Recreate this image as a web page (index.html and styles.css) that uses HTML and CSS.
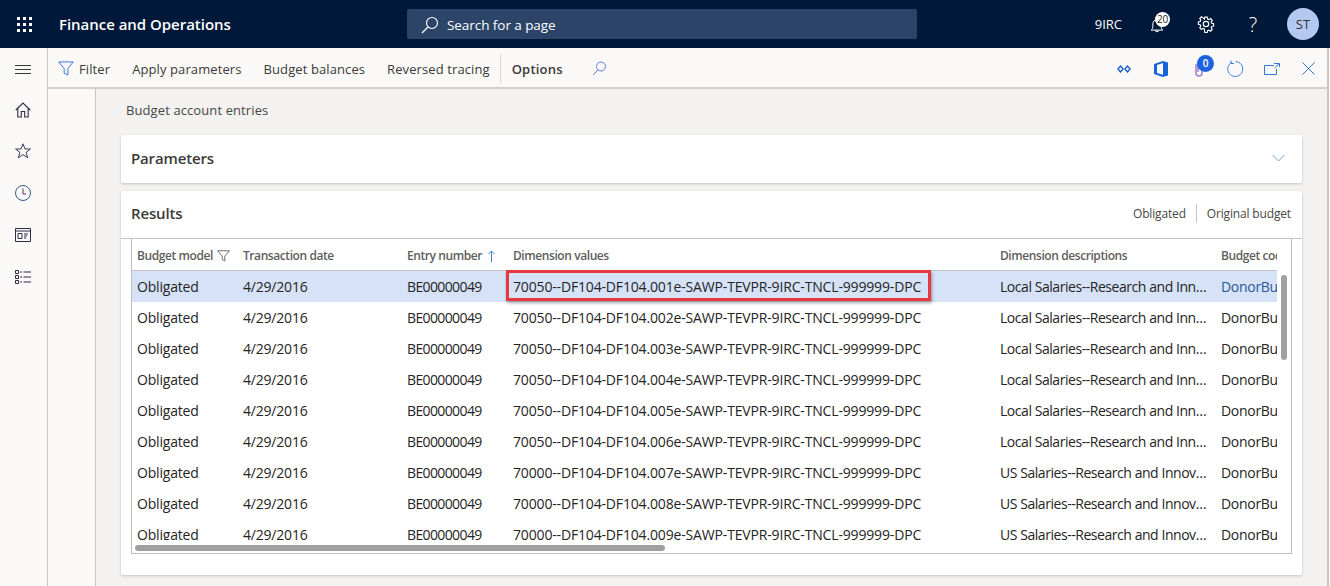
FILE: index.html
```html
<!DOCTYPE html>
<html lang="en">
<head>
<meta charset="utf-8">
<title>Budget account entries</title>
<link rel="stylesheet" href="styles.css">
</head>
<body>
<header class="topbar">
  <button class="waffle" aria-label="Apps">
    <svg width="16" height="16" viewBox="0 0 16 16" fill="#fff"><rect x="0" y="0" width="3" height="3"/><rect x="6" y="0" width="3" height="3"/><rect x="12" y="0" width="3" height="3"/><rect x="0" y="6" width="3" height="3"/><rect x="6" y="6" width="3" height="3"/><rect x="12" y="6" width="3" height="3"/><rect x="0" y="12" width="3" height="3"/><rect x="6" y="12" width="3" height="3"/><rect x="12" y="12" width="3" height="3"/></svg>
  </button>
  <div class="brand">Finance and Operations</div>
  <div class="search">
    <svg width="18" height="18" viewBox="0 0 18 18" fill="none" stroke="#fff" stroke-width="1.2"><circle cx="11" cy="7" r="5.5"/><path d="M7 11l-6 6"/></svg>
    <span>Search for a page</span>
  </div>
  <div class="top-right">
    <span class="company">9IRC</span>
    <span class="bell">
      <svg width="14" height="15" viewBox="0 0 16 18" fill="none" stroke="#fff" stroke-width="1.2"><path d="M1 14.500c1.500-1 2-2.500 2-5V7a5 5 0 0 1 10 0v2.500c0 2.500.5 4 2 5z"/><path d="M6 14.500a2 2 0 0 0 4 0"/></svg>
      <span class="bell-badge">20</span>
    </span>
    <svg class="gear" width="18" height="18" viewBox="0 0 20 20" fill="none" stroke="#fff" stroke-width="1.400"><circle cx="10" cy="10" r="3"/><path d="M8.500 1.500h3l.5 2.400 1.600.7 2.100-1.300 2 2.100-1.300 2 .7 1.700 2.300.5v3l-2.300.5-.7 1.700 1.300 2-2 2.100-2.100-1.300-1.600.7-.5 2.300h-3L8 16.100l-1.600-.7-2.100 1.300-2-2.100 1.300-2-.7-1.700-2.300-.5v-3l2.300-.5.7-1.700-1.300-2 2-2.100 2.100 1.300L8 3.900z" transform="translate(1 1) scale(.9)"/></svg>
    <span class="help">?</span>
    <span class="avatar">ST</span>
  </div>
</header>
<div class="shell">
  <nav class="rail">
    <svg class="burger" width="16" height="9" viewBox="0 0 16 9" stroke="#3b3a39" stroke-width="1"><path d="M0 .5h16M0 4.500h16M0 8.500h16"/></svg>
    <svg class="ri ri-home" width="16" height="16" viewBox="0 0 16 16" fill="none" stroke="#2d2a4a" stroke-width="1.100"><path d="M.8 8 8 1l7.200 7M2.800 6.500V15h3.500V9.500h3.400V15h3.500V6.500"/></svg>
    <svg class="ri ri-star" width="16" height="16" viewBox="0 0 16 16" fill="none" stroke="#3a3a55" stroke-width="1"><path d="M8 .8 10 6h5.400l-4.300 3.400 1.600 5.400L8 11.600l-4.700 3.200 1.600-5.400L.6 6H6z"/></svg>
    <svg class="ri ri-clock" width="16" height="16" viewBox="0 0 16 16" fill="none" stroke-width="1"><circle cx="8" cy="8" r="7.500" stroke="#3a5a8a"/><path d="M8 3.500V9h3" stroke="#5a2a6a"/></svg>
    <svg class="ri ri-card" width="16" height="14" viewBox="0 0 16 14" fill="none" stroke="#2d2a4a" stroke-width="1"><path d="M.5.500h15v13H.5zM.5 3h15M3 5.500h4v5H3zM9 6h4M9 8h3M9 10h2"/></svg>
    <svg class="ri ri-list" width="16" height="14" viewBox="0 0 16 14" fill="none" stroke="#2d2a4a" stroke-width="1"><path d="M.5.500h3v3h-3zM.5 5.500h3v3h-3zM.5 10.500h3v3h-3zM5 2h2M8.500 2H16M5 7h2M8.500 7H16M5 12h2M8.500 12H16"/></svg>
  </nav>
  <div class="workspace">
    <div class="cmdbar">
      <svg class="cmd-filter" width="16" height="15" viewBox="0 0 17 16" fill="none" stroke="#2f6fd8" stroke-width="1"><path d="M.8 1h15.400L10.500 8V15l-4-2V8z"/></svg>
      <span class="cmd cmd-first">Filter</span>
      <span class="cmd">Apply parameters</span>
      <span class="cmd">Budget balances</span>
      <span class="cmd">Reversed tracing</span>
      <span class="cmd-sep"></span>
      <span class="cmd cmd-strong">Options</span>
      <svg class="cmd-search" width="15" height="15" viewBox="0 0 14 15" fill="none" stroke="#5b7fe0" stroke-width="1"><circle cx="8.500" cy="5.500" r="4.500"/><path d="M5.300 9 .8 14"/></svg>
      <div class="cmd-right">
        <svg width="14" height="8" viewBox="0 0 14 8" fill="#1f5fc8"><path d="M3.500 0 7 4 3.500 8 0 4zM3.500 2.300 1.800 4l1.700 1.700L5.200 4zM10.500 0 14 4l-3.500 4L7 4zM10.500 2.300 8.800 4l1.700 1.700L12.200 4z" fill-rule="evenodd"/></svg>
        <svg class="ic-office" width="14" height="16" viewBox="0 0 14 16" fill="#1565d8"><path d="M0 3 9 0l5 1.500v13L9 16 0 13zM9 2 3 4v8l6 1.800z" fill-rule="evenodd"/></svg>
        <span class="attach">
          <svg width="8" height="17" viewBox="0 0 8 17" fill="none" stroke="#a77ac8" stroke-width="1.500"><path d="M1 4v9a3 3 0 0 0 6 0V3a2 2 0 0 0-4 0v9"/></svg>
          <span class="attach-badge">0</span>
        </span>
        <svg class="ic-refresh" width="17" height="17" viewBox="0 0 17 17" fill="none" stroke="#3f80e0" stroke-width="1"><path d="M4.500 2.500a7.500 7.500 0 1 0 4-1"/><path d="M4 .5v3h3"/></svg>
        <svg class="ic-open" width="16" height="12" viewBox="0 0 16 12" fill="none" stroke="#2f78d8" stroke-width="1"><path d="M10 2.500H.5v9h12V6M10 .5h5.500V4M15 1l-4.500 4"/></svg>
        <svg class="ic-close" width="13" height="13" viewBox="0 0 13 13" stroke="#2f78d8" stroke-width="1"><path d="M.5.500l12 12M12.500.500l-12 12"/></svg>
      </div>
    </div>
    <div class="below">
      <div class="subrail"></div>
      <main class="content">
        <div class="crumb">Budget account entries</div>
        <section class="card card-params">
          <h2>Parameters</h2>
          <svg width="13" height="8" viewBox="0 0 13 8" fill="none" stroke="#6f9bd8" stroke-width="1"><path d="M.5 1l6 6 6-6"/></svg>
        </section>
        <section class="card card-results">
          <div class="results-head">
            <h2>Results</h2>
            <div class="tags"><span>Obligated</span><i></i><span>Original budget</span></div>
          </div>
          <div class="grid">
            <div class="grid-view">
              <div class="row row-head">
                <div class="c c1">Budget model<svg class="th-filter" width="13" height="12" viewBox="0 0 13 12" fill="none" stroke="#605e5c" stroke-width=".9"><path d="M.5.800h12L7.800 6v5l-2.600-1.500V6z"/></svg></div>
                <div class="c c2">Transaction date</div>
                <div class="c c3">Entry number<svg class="th-sort" width="7" height="12" viewBox="0 0 7 12" fill="none" stroke="#4a7fc8" stroke-width="1"><path d="M3.500 12V1M.5 4l3-3 3 3"/></svg></div>
                <div class="c c4">Dimension values</div>
                <div class="c c5">Dimension descriptions</div>
                <div class="c c6">Budget code</div>
              </div>
              <div class="row row-sel">
                <div class="c c1">Obligated</div><div class="c c2">4/29/2016</div><div class="c c3">BE00000049</div>
                <div class="c c4 hl">70050--DF104-DF104.001e-SAWP-TEVPR-9IRC-TNCL-999999-DPC</div>
                <div class="c c5">Local Salaries--Research and Innovation</div><div class="c c6 link">DonorBudget</div>
              </div>
              <div class="row"><div class="c c1">Obligated</div><div class="c c2">4/29/2016</div><div class="c c3">BE00000049</div><div class="c c4">70050--DF104-DF104.002e-SAWP-TEVPR-9IRC-TNCL-999999-DPC</div><div class="c c5">Local Salaries--Research and Innovation</div><div class="c c6">DonorBudget</div></div>
              <div class="row"><div class="c c1">Obligated</div><div class="c c2">4/29/2016</div><div class="c c3">BE00000049</div><div class="c c4">70050--DF104-DF104.003e-SAWP-TEVPR-9IRC-TNCL-999999-DPC</div><div class="c c5">Local Salaries--Research and Innovation</div><div class="c c6">DonorBudget</div></div>
              <div class="row"><div class="c c1">Obligated</div><div class="c c2">4/29/2016</div><div class="c c3">BE00000049</div><div class="c c4">70050--DF104-DF104.004e-SAWP-TEVPR-9IRC-TNCL-999999-DPC</div><div class="c c5">Local Salaries--Research and Innovation</div><div class="c c6">DonorBudget</div></div>
              <div class="row"><div class="c c1">Obligated</div><div class="c c2">4/29/2016</div><div class="c c3">BE00000049</div><div class="c c4">70050--DF104-DF104.005e-SAWP-TEVPR-9IRC-TNCL-999999-DPC</div><div class="c c5">Local Salaries--Research and Innovation</div><div class="c c6">DonorBudget</div></div>
              <div class="row"><div class="c c1">Obligated</div><div class="c c2">4/29/2016</div><div class="c c3">BE00000049</div><div class="c c4">70050--DF104-DF104.006e-SAWP-TEVPR-9IRC-TNCL-999999-DPC</div><div class="c c5">Local Salaries--Research and Innovation</div><div class="c c6">DonorBudget</div></div>
              <div class="row"><div class="c c1">Obligated</div><div class="c c2">4/29/2016</div><div class="c c3">BE00000049</div><div class="c c4">70000--DF104-DF104.007e-SAWP-TEVPR-9IRC-TNCL-999999-DPC</div><div class="c c5">US Salaries--Research and Innovation</div><div class="c c6">DonorBudget</div></div>
              <div class="row"><div class="c c1">Obligated</div><div class="c c2">4/29/2016</div><div class="c c3">BE00000049</div><div class="c c4">70000--DF104-DF104.008e-SAWP-TEVPR-9IRC-TNCL-999999-DPC</div><div class="c c5">US Salaries--Research and Innovation</div><div class="c c6">DonorBudget</div></div>
              <div class="row"><div class="c c1">Obligated</div><div class="c c2">4/29/2016</div><div class="c c3">BE00000049</div><div class="c c4">70000--DF104-DF104.009e-SAWP-TEVPR-9IRC-TNCL-999999-DPC</div><div class="c c5">US Salaries--Research and Innovation</div><div class="c c6">DonorBudget</div></div>
            </div>
            <div class="scroll-v"></div>
            <div class="scroll-h"></div>
          </div>
        </section>
      </main>
    </div>
  </div>
</div>
</body>
</html>
```
FILE: styles.css
```css
*, *::after { box-sizing: border-box; }
html, body { margin: 0; height: 100%; overflow: hidden; }
body {
  font-family: "Open Sans", "Noto Sans", sans-serif;
  font-size: 13px;
  color: #252423;
  background: #faf9f8;
  display: flex;
  flex-direction: column;
  height: 586px;
}
h2 { margin: 0; font-weight: 600; font-size: 15px; color: #3b3a39; letter-spacing: -.15px; }

/* top bar */
.topbar { height: 48px; flex: none; background: #00183a; color: #fff; display: flex; align-items: center; }
.waffle { width: 48px; height: 48px; padding: 1px 0 0 1px; background: none; border: 0; display: flex; align-items: center; justify-content: center; }
.brand { margin-left: 11px; width: 348px; font-size: 15px; font-weight: 600; letter-spacing: -.03px; }
.search { width: 510px; height: 30px; background: #2b4468; border-radius: 2px; display: flex; align-items: center; padding: 1px 0 0 14px; gap: 8px; font-size: 13.500px; letter-spacing: -.06px; }
.top-right { margin-left: auto; display: flex; align-items: center; height: 48px; padding-right: 11px; }
.company { font-size: 13px; margin-right: 28px; }
.bell { position: relative; display: flex; margin-right: 33px; padding-top: 3px; }
.bell-badge { position: absolute; left: 5px; top: -3px; width: 15px; height: 15px; border-radius: 50%; background: #fff; color: #252423; font-size: 10px; line-height: 15px; text-align: center; letter-spacing: -.3px; }
.gear { margin-right: 31px; }
.help { font-size: 20px; font-weight: 300; width: 14px; text-align: center; margin-right: 27px; }
.avatar { width: 32px; height: 32px; border-radius: 50%; background: #b4c9ef; color: #323130; font-size: 13px; line-height: 32px; text-align: center; }

/* shell */
.shell { flex: 1; display: flex; min-height: 0; }
.rail { width: 48px; flex: none; border-right: 1px solid #c8c6c4; background: #faf9f8; display: flex; flex-direction: column; align-items: center; padding-top: 17px; }
.burger { margin-bottom: 28px; margin-right: 1px; }
.ri { margin-right: 1px; }
.ri-home { margin-bottom: 25px; }
.ri-star { margin-bottom: 26px; }
.ri-clock { margin-bottom: 27px; }
.ri-card { margin-bottom: 28px; }
.workspace { flex: 1; display: flex; flex-direction: column; min-width: 0; border-right: 2px solid #c8c6c4; margin-right: 1px; }

/* command bar */
.cmdbar { height: 41px; flex: none; display: flex; align-items: center; border-bottom: 2px solid #d2d0ce; background: #faf9f8; padding: 2px 0 0 10px; color: #3b3a39; font-size: 13px; }
.cmd-filter { margin-right: 5px; }
.cmd { margin-right: 22px; letter-spacing: .1px; white-space: nowrap; }
.cmd-first { margin-right: 22px; }
.cmd-sep { width: 1px; height: 30px; background: #dedcda; margin-left: -12px; margin-right: 11px; }
.cmd-strong { font-weight: 600; margin-right: 29px; letter-spacing: .2px; }
.cmd-right { margin-left: auto; display: flex; align-items: center; padding-right: 12px; }
.cmd-right svg { flex: none; }
.ic-office { margin-left: 23px; }
.attach { position: relative; display: flex; margin-left: 27px; }
.attach-badge { position: absolute; left: 2px; top: -5px; width: 17px; height: 17px; border-radius: 50%; background: #1d63dd; color: #fff; font-size: 10px; line-height: 17px; text-align: center; font-weight: 600; }
.ic-refresh { margin-left: 24px; }
.ic-open { margin-left: 20px; }
.ic-close { margin-left: 22px; }

/* content */
.below { flex: 1; display: flex; min-height: 0; }
.subrail { width: 48px; flex: none; border-right: 1px solid #c8c6c4; background: #faf9f8; }
.content { flex: 1; min-width: 0; background: #f3f2f1; padding: 0 25px; }
.crumb { height: 46px; padding: 12px 0 0 5px; font-size: 13px; color: #484644; letter-spacing: .1px; }
.card { background: #fff; border-radius: 2px; box-shadow: 0 1px 3px rgba(0,0,0,.2); }
.card-params { height: 48px; display: flex; align-items: center; justify-content: space-between; padding: 0 17px 2px 10px; margin-bottom: 8px; }
.card-results { height: 384px; }
.results-head { height: 48px; display: flex; align-items: center; justify-content: space-between; padding: 0 11px 2px 10px; border-bottom: 1px solid #c8c6c4; }
.results-head h2 { margin-bottom: 2px; }
.tags { display: flex; align-items: center; font-size: 12px; color: #484644; letter-spacing: -.16px; }
.tags i { width: 1px; height: 19px; background: #c8c6c4; margin: 0 10px; }

/* grid */
.grid { position: relative; margin: 0 10px; height: 315px; width: 1161px; border: 1px solid #c0bebc; border-top: 0; overflow: hidden; }
.grid-view { height: 301px; overflow: hidden; }
.row { display: flex; height: 31px; width: 1145px; align-items: center; overflow: hidden; font-size: 14px; }
.row-head { height: 32px; font-size: 12px; font-weight: 600; color: #605e5c; border-bottom: 1px solid #c8c6c4; padding-top: 2px; }
.row-sel { background: #d5e2f8; overflow: visible; position: relative; z-index: 1; }
.c { padding-left: 5px; white-space: nowrap; overflow: hidden; text-overflow: ellipsis; flex: none; letter-spacing: -.2px; display: flex; align-items: center; height: 100%; }
.row-head .c { letter-spacing: -.42px; }
.c5, .c6 { display: block; line-height: 32px; }
.row-head .c5, .row-head .c6 { line-height: 30px; }
.c1 { width: 106px; }
.c2 { width: 164px; }
.c3 { width: 106px; letter-spacing: -.62px; }
.c4 { width: 487px; letter-spacing: -.16px; }
.c5 { width: 221px; padding-right: 9px; letter-spacing: -.45px; }
.c6 { width: 61px; text-overflow: clip; letter-spacing: -.3px; }
.link { color: #2b579a; }
.th-filter { margin-left: 4px; }
.th-sort { margin-left: 6px; }
.hl { overflow: visible; position: relative; }
.hl::after { content: ""; position: absolute; left: -2px; top: -1px; width: 425px; height: 31px; border: 3px solid #e8383f; box-shadow: 1px 2px 3px rgba(0,0,0,.35); pointer-events: none; }
.scroll-v { position: absolute; left: 1149px; top: 36px; width: 6px; height: 85px; background: #a0a0a0; border-radius: 3px; z-index: 2; }
.scroll-h { position: absolute; left: 3px; top: 306px; width: 530px; height: 6px; background: #a0a0a0; border-radius: 3px; z-index: 2; }
```
